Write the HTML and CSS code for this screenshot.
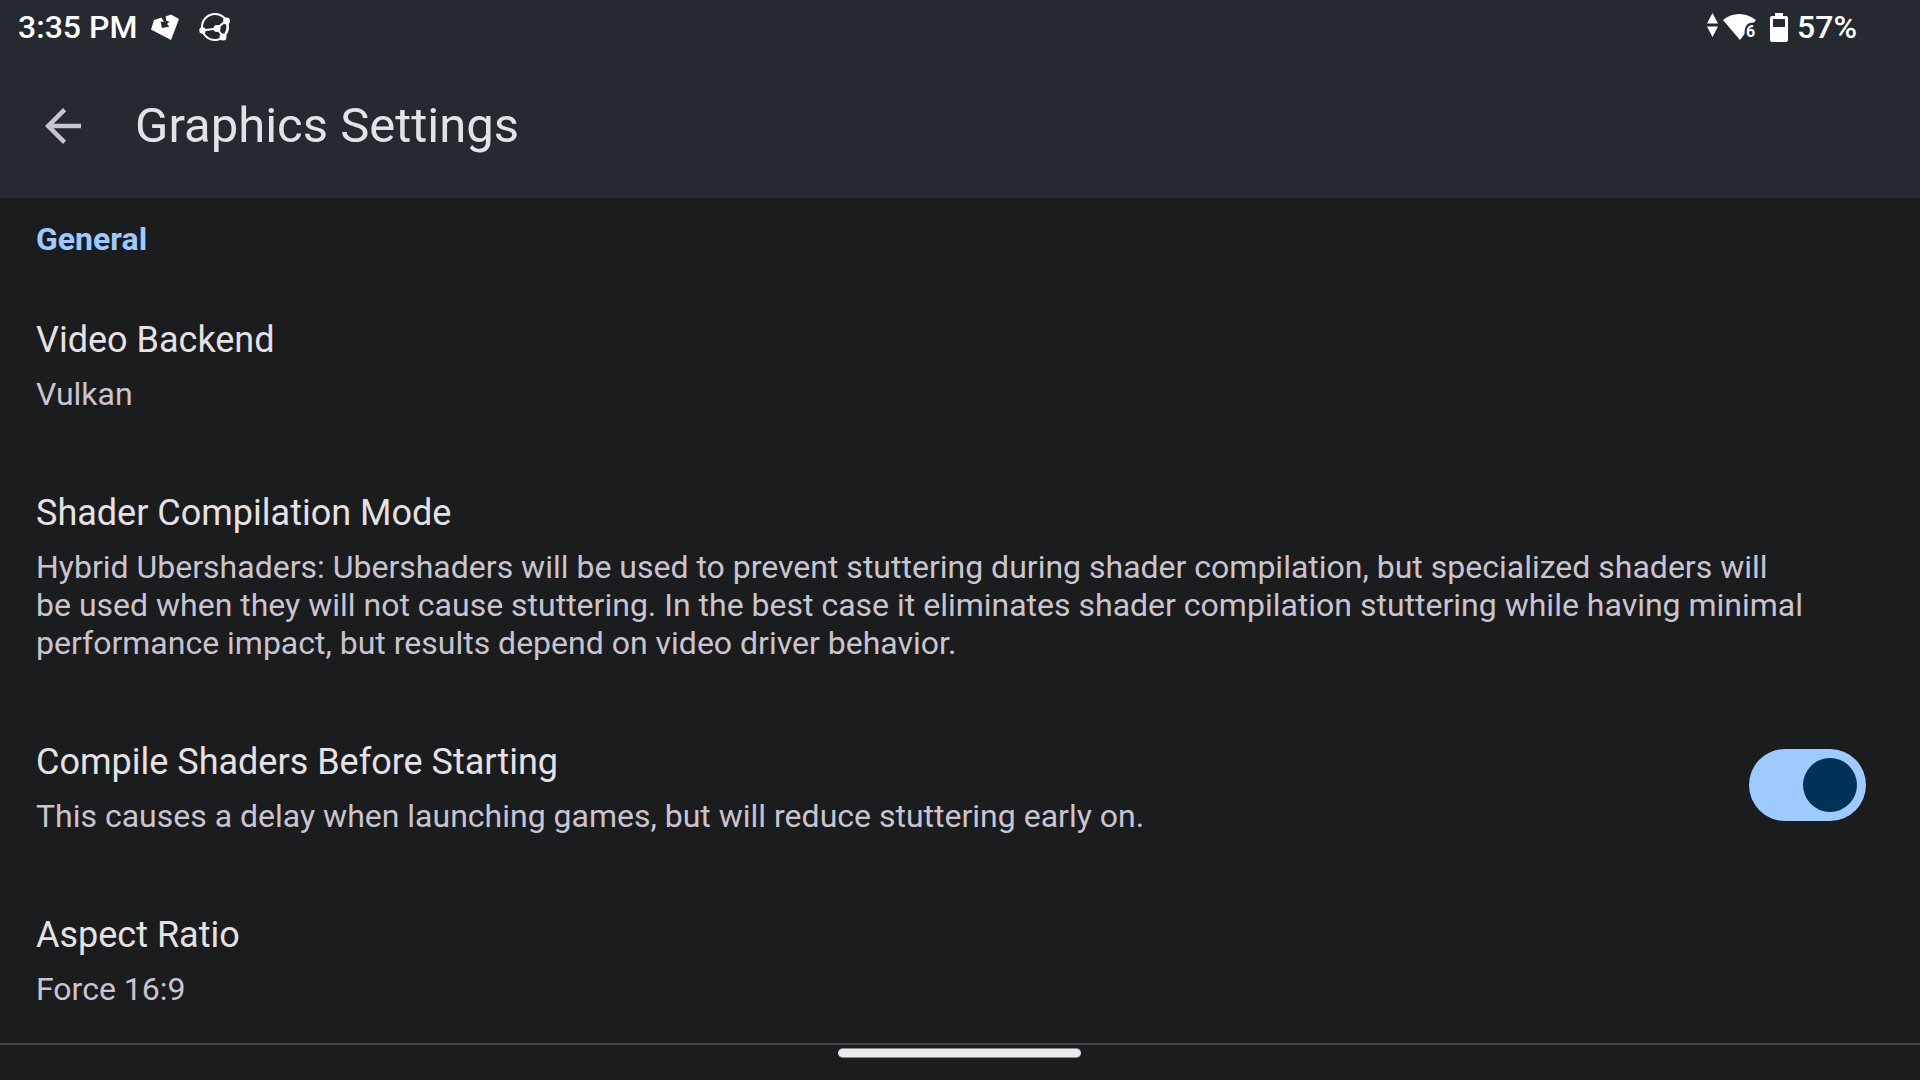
FILE: index.html
```html
<!DOCTYPE html>
<html lang="en">
<head>
<meta charset="utf-8">
<meta name="viewport" content="width=device-width, initial-scale=1">
<title>Graphics Settings</title>
<link rel="stylesheet" href="styles.css">
</head>
<body>
<header class="top">
  <div class="status">
    <div class="status-left">
      <time>3:35 PM</time>
      <svg class="note-icon" width="28" height="28" viewBox="0 0 28 28" aria-hidden="true"><path fill="#fff" d="M0 16.500 3 7 10.500 4.500 13 9 9.500 8.500 11 15 18.500 13.500 16 11 18.500 8.500 15.500 8 14.500 3.500 20 1.500 28 6 20 27Z"/></svg>
      <svg class="mesh-icon" width="31" height="28" viewBox="0 0 31 28" aria-hidden="true"><g fill="none" stroke="#fff" stroke-width="2"><circle cx="16" cy="14" r="13"/><path d="M3 17.500 18 15.500 27 7.500M18 15.500 24 23.500M27 7C29 12 29 19 24 24"/></g><g fill="#fff"><circle cx="3.500" cy="17.500" r="3.200"/><circle cx="18" cy="15.500" r="3.500"/><circle cx="27.500" cy="8" r="3.400"/><circle cx="24" cy="24" r="3.500"/></g></svg>
    </div>
    <div class="status-right">
      <svg width="50" height="28" viewBox="0 0 50 28" role="img" aria-label="Wi-Fi 6"><path fill="#fff" d="M0 10.500 5.500 0 11 10.500ZM0 13.500H11L5.500 24ZM16 7C25-1 39-1 49 7L47 9.500C41 9 37.500 12 37.500 21L33 27Z"/><text class="wifi-gen" x="39" y="24">6</text></svg>
      <svg class="battery" width="18" height="29" viewBox="0 0 18 29" aria-hidden="true"><path fill="#fff" fill-rule="evenodd" d="M5 0H13V3H16A2 2 0 0 1 18 5V27A2 2 0 0 1 16 29H2A2 2 0 0 1 0 27V5A2 2 0 0 1 2 3H5ZM3 6V14H15V6Z"/></svg>
      <span>57%</span>
    </div>
  </div>
  <div class="toolbar">
    <button class="back" type="button" aria-label="Back"><svg width="54" height="54" viewBox="0 0 24 24"><path fill="#cac4d0" d="M20 11H7.830l5.590-5.590L12 4l-8 8 8 8 1.410-1.410L7.830 13H20z"/></svg></button>
    <h1>Graphics Settings</h1>
  </div>
</header>
<main>
  <h2>General</h2>
  <ul class="settings">
    <li><h3>Video Backend</h3><p>Vulkan</p></li>
    <li><h3>Shader Compilation Mode</h3><p>Hybrid Ubershaders: Ubershaders will be used to prevent stuttering during shader compilation, but specialized shaders will be used when they will not cause stuttering. In the best case it eliminates shader compilation stuttering while having minimal performance impact, but results depend on video driver behavior.</p></li>
    <li class="with-switch">
      <div><h3><label for="compile">Compile Shaders Before Starting</label></h3><p id="compile-note">This causes a delay when launching games, but will reduce stuttering early on.</p></div>
      <input class="switch" type="checkbox" role="switch" id="compile" aria-describedby="compile-note" checked>
    </li>
    <li><h3>Aspect Ratio</h3><p>Force 16:9</p></li>
  </ul>
</main>
<div class="gesture-bar"></div>
</body>
</html>
```
FILE: styles.css
```css
* { box-sizing: border-box; }
body { margin: 0; min-height: 100vh; background: #1b1c1e; color: #e6e1e5; font-family: Roboto, "Noto Sans", sans-serif; font-size: 32px; line-height: 38px; }
h1, h2, h3, p, ul { margin: 0; padding: 0; font-size: inherit; }
.top { background: #252930; }
.status { display: flex; justify-content: space-between; align-items: center; height: 54px; padding: 0 63px 0 18px; color: #fff; font-weight: 500; }
.status-left, .status-right { display: flex; align-items: center; }
.note-icon { margin-left: 14px; }
.mesh-icon { margin-left: 20px; }
.battery { margin: 0 9px 0 13px; }
.wifi-gen { fill: #fff; font-size: 16px; font-weight: 700; }
.toolbar { display: flex; align-items: center; gap: 45px; height: 144px; padding: 0 36px; }
.back { display: flex; padding: 0; border: 0; background: none; cursor: pointer; }
h1 { font-size: 49px; line-height: 60px; font-weight: 400; color: #e3e2e6; }
h2 { padding: 22px 36px; color: #9ecaff; font-weight: 700; }
.settings { display: flex; flex-direction: column; gap: 79px; padding: 39px 54px 35px 36px; list-style: none; border-bottom: 2px solid #42474e; }
h3 { margin-bottom: 14px; font-size: 36px; line-height: 42px; font-weight: 400; }
p { color: #cac4d0; padding-right: 60px; }
.with-switch { display: flex; justify-content: space-between; align-items: flex-start; }
.switch { appearance: none; display: flex; justify-content: flex-end; flex: none; width: 117px; height: 72px; margin: 8px 0 0; padding: 9px; border-radius: 36px; background: #9ecaff; cursor: pointer; }
.switch::before { content: ""; width: 54px; height: 54px; border-radius: 50%; background: #003258; }
.switch:not(:checked) { justify-content: flex-start; background: #42474e; }
.gesture-bar { position: fixed; bottom: 22px; left: 50%; width: 243px; height: 10px; margin-left: -122px; border: 1px solid #8a8a8b; border-width: 1px 0; border-radius: 5px; background: #ececec; }
```
